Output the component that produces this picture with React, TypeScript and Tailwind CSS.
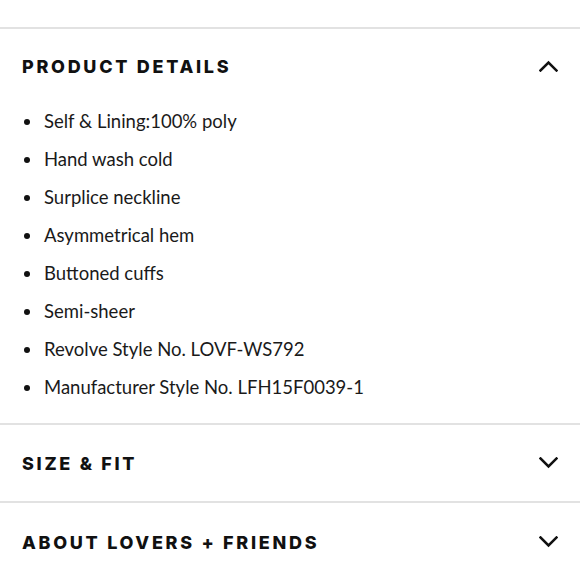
import React from "react";

const details = [
  "Self & Lining:100% poly",
  "Hand wash cold",
  "Surplice neckline",
  "Asymmetrical hem",
  "Buttoned cuffs",
  "Semi-sheer",
  "Revolve Style No. LOVF-WS792",
  "Manufacturer Style No. LFH15F0039-1",
];

const Chevron = ({ up }: { up?: boolean }) => (
  <svg width="19" height="12" viewBox="0 0 19 12" fill="none" className="shrink-0">
    <path
      d={up ? "M1.5 10.5 L9.5 2.5 L17.5 10.5" : "M1.5 1.5 L9.5 9.5 L17.5 1.5"}
      stroke="#111"
      strokeWidth="2.5"
      strokeLinecap="square"
    />
  </svg>
);

const Heading = ({ children }: { children: React.ReactNode }) => (
  <h2 className="font-['Inter',sans-serif] text-[18px] font-extrabold tracking-[0.15em] text-[#111]">
    {children}
  </h2>
);

export default function App() {
  return (
    <div className="w-[580px] h-[580px] overflow-hidden bg-white">
      <div className="h-[27px]" />
      <div className="border-t-2 border-[#e2e2e2]">
        <div className="h-[74px] flex items-center justify-between pl-[22px] pr-[22px]">
          <Heading>PRODUCT DETAILS</Heading>
          <Chevron up />
        </div>
        <ul className="pb-[16px] font-['Lato',sans-serif] text-[18.5px] text-[#1a1a1a]">
          {details.map((d) => (
            <li key={d} className="h-[38px] flex items-center">
              <span className="w-[6px] h-[6px] rounded-full bg-[#111] ml-[24px] mr-[14px]" />
              {d}
            </li>
          ))}
        </ul>
      </div>
      <div className="border-t-2 border-[#e2e2e2]">
        <div className="h-[76px] flex items-center justify-between pl-[22px] pr-[22px]">
          <Heading>SIZE &amp; FIT</Heading>
          <Chevron />
        </div>
      </div>
      <div className="border-t-2 border-[#e2e2e2]">
        <div className="h-[78px] flex items-center justify-between pl-[22px] pr-[22px]">
          <Heading>ABOUT LOVERS + FRIENDS</Heading>
          <Chevron />
        </div>
      </div>
    </div>
  );
}
